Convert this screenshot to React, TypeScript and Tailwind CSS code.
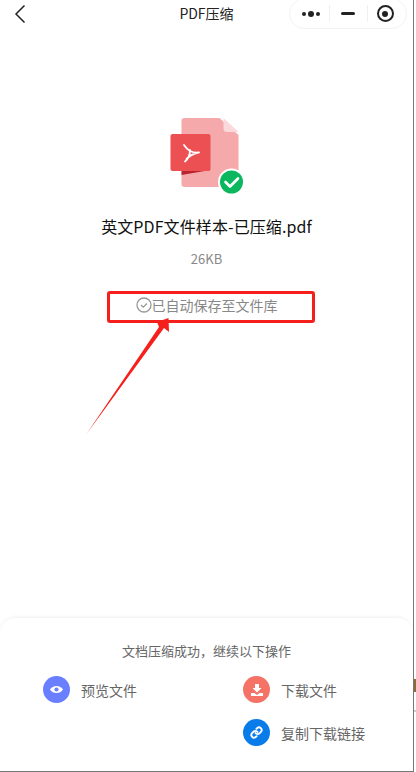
const FONT = "font-['Noto_Sans_CJK_SC','Liberation_Sans',sans-serif]"

function CapsuleMenu() {
  return (
    <div className="w-[118px] h-[31px] rounded-full border border-[#f3f3f3] flex items-center">
      <div className="flex-1 pl-[3px] flex items-center justify-center gap-[2px]">
        <span className="w-[4px] h-[4px] rounded-full bg-[#222]" />
        <span className="w-[6px] h-[6px] rounded-full bg-[#222]" />
        <span className="w-[4px] h-[4px] rounded-full bg-[#222]" />
      </div>
      <div className="w-px h-[17px] bg-[#f0f0f0]" />
      <div className="w-[37px] flex items-center justify-center">
        <span className="w-[14px] h-[3px] rounded-full bg-[#222]" />
      </div>
      <div className="w-px h-[17px] bg-[#f0f0f0]" />
      <div className="flex-1 pr-[3px] flex items-center justify-center">
        <span className="w-[17px] h-[17px] rounded-full border-2 border-[#222] flex items-center justify-center">
          <span className="w-[6px] h-[6px] rounded-full bg-[#222]" />
        </span>
      </div>
    </div>
  )
}

function FileIcon() {
  return (
    <svg width="88" height="84" viewBox="0 0 88 84" fill="none">
      <path d="M18.500 6a3 3 0 0 1 3-3h35l19 17v49a3 3 0 0 1-3 3h-51a3 3 0 0 1-3-3z" fill="#f5a9ab" />
      <path d="M60.500 3l15 14H64a3.500 3.500 0 0 1-3.500-3.500z" fill="#fbd9da" />
      <path d="M18.500 55h29l-29 5z" fill="#b8252c" />
      <rect x="7.500" y="19" width="40" height="37" rx="2" fill="#ec5052" />
      <path
        d="M21 30c2 3 4 5 6 6 3 1.500 6 2 9 1.500M27 35c0 5-2 9-5 11.500M23.500 44c3-3 7-5.500 11.500-6.500"
        stroke="#fff"
        strokeWidth="1.800"
        strokeLinecap="round"
      />
      <circle cx="68.500" cy="67" r="13.500" fill="#fff" />
      <circle cx="68.500" cy="67" r="11.500" fill="#0ab75f" />
      <path d="M62.500 67l4.500 4.500 8-8" stroke="#fff" strokeWidth="2.600" strokeLinecap="round" strokeLinejoin="round" />
    </svg>
  )
}

function Action({ label, color, children }: { label: string; color: string; children: React.ReactNode }) {
  return (
    <div className="flex items-center gap-[11px] h-[27px]">
      <span className={`w-[27px] h-[27px] rounded-full flex items-center justify-center ${color}`}>{children}</span>
      <span className="text-[14px] leading-[20px] pt-[1px] text-[#666]">{label}</span>
    </div>
  )
}

export default function App() {
  return (
    <div className={`${FONT} relative w-[416px] h-[772px] bg-white flex flex-col overflow-hidden`}>
      <header className="h-[27px] grid grid-cols-[1fr_auto_1fr] grid-rows-[27px] items-center px-[6px] mr-[3px]">
        <svg className="ml-[8px]" width="12" height="20" viewBox="0 0 12 20" fill="none">
          <path d="M10.500 1.500L2 10l8.500 8.500" stroke="#222" strokeWidth="1.500" />
        </svg>
        <span className="text-[14px] text-[#222]">PDF压缩</span>
        <div className="flex justify-end">
          <CapsuleMenu />
        </div>
      </header>

      <main className="flex flex-col items-center mr-[3px] pt-[88px] flex-1">
        <FileIcon />
        <div className="mt-[15px] text-[16px] leading-[24px] tracking-[0.1px] text-[#111]">英文PDF文件样本-已压缩.pdf</div>
        <div className="mt-[12px] text-[13px] leading-[18px] text-[#888]">26KB</div>
        <div className="mt-[27px] h-[20px] flex items-center">
          <svg width="16" height="16" viewBox="0 0 16 16" fill="none">
            <circle cx="8" cy="8" r="7" stroke="#999" strokeWidth="1.300" />
            <path d="M5 8l2.200 2.200L11 6.500" stroke="#999" strokeWidth="1.300" />
          </svg>
          <span className="text-[14px] leading-[20px] text-[#888]">已自动保存至文件库</span>
        </div>
      </main>

      {/* red annotation drawn over the screenshot */}
      <div className="absolute left-[107px] top-[291px] w-[208px] h-[32px] border-[3px] border-[#f5201c] rounded-[3px]" />
      <svg className="absolute left-[86px] top-[316px]" width="90" height="118" viewBox="0 0 90 118" fill="none">
        <path d="M0.500 118L73 11 71 6 82.500 2 83 16 78 12z" fill="#f5201c" />
      </svg>

      <section className="mr-[3px] h-[155px] rounded-t-[16px] border-t border-[#f5f5f5] shadow-[0_-1px_3px_rgba(0,0,0,0.04)] flex flex-col">
        <div className="mt-[24px] text-center text-[13px] leading-[18px] text-[#666]">文档压缩成功，继续以下操作</div>
        <div className="mt-[16px] grid grid-cols-[200px_1fr] gap-y-[16px] pl-[43px]">
          <Action label="预览文件" color="bg-[#6a7fff]">
            <svg width="15" height="15" viewBox="0 0 16 16">
              <path d="M1 8c3-5 11-5 14 0-3 5-11 5-14 0z" fill="#fff" />
              <circle cx="8" cy="8" r="2.200" fill="#6a7fff" />
            </svg>
          </Action>
          <Action label="下载文件" color="bg-[#f47266]">
            <svg width="14" height="14" viewBox="0 0 14 14" fill="#fff">
              <path d="M5 1h4v4h2.500L7 9.500 2.500 5H5z" />
              <path d="M1 10h3.500L7 12l2.500-2H13v3H1z" />
            </svg>
          </Action>
          <div />
          <Action label="复制下载链接" color="bg-[#0a7cea]">
            <svg width="13" height="13" viewBox="0 0 24 24" fill="none" stroke="#fff" strokeWidth="3.500" strokeLinecap="round">
              <path d="M10 13a5 5 0 0 0 7.500.5l3-3a5 5 0 0 0-7-7l-1.700 1.700" />
              <path d="M14 11a5 5 0 0 0-7.500-.5l-3 3a5 5 0 0 0 7 7l1.700-1.700" />
            </svg>
          </Action>
        </div>
      </section>

      <div className="absolute left-[413px] top-0 bottom-0 w-px bg-[#777]" />
      <div className="absolute left-0 w-[414px] bottom-0 h-px bg-[#777]" />
      <div className="absolute left-[414px] top-[679px] w-[2px] h-[13px] bg-[#8a6a3a]" />
      <div className="absolute left-[414px] top-[710px] w-[2px] h-[2px] bg-[#ccc]" />
    </div>
  )
}
